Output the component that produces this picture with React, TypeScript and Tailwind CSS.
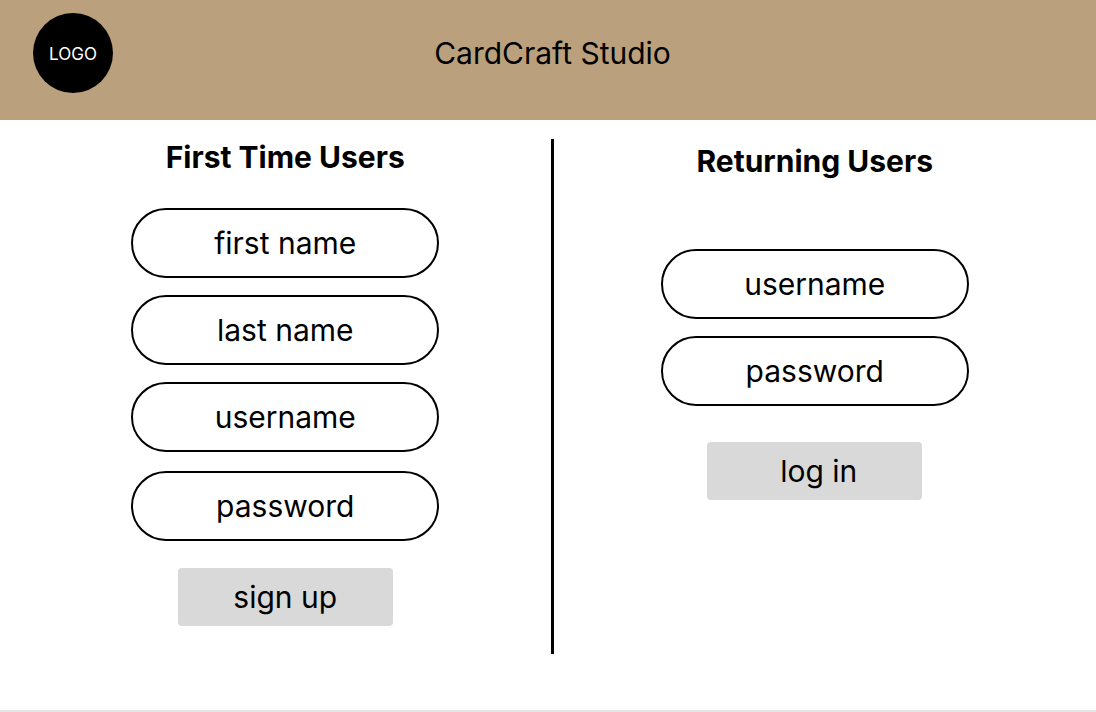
type FieldProps = {
  label: string;
  name: string;
  type?: string;
};

function Field({ label, name, type = "text" }: FieldProps) {
  return (
    <input
      type={type}
      name={name}
      aria-label={label}
      placeholder={label}
      className="h-[70px] w-full rounded-full border-2 border-black bg-white px-8 text-center text-[30px] text-black placeholder:text-black placeholder:opacity-100"
    />
  );
}

const buttonClass = "h-[58px] w-[215px] rounded bg-[#d9d9d9] text-[30px] text-black";

export default function App() {
  return (
    <div className="flex min-h-screen flex-col border-b-2 border-[#e6e6e6] bg-white font-['Inter',sans-serif] text-black">
      <header className="grid h-[120px] grid-cols-[80px_1fr_80px] items-start bg-[#baa07c] pt-[13px] pr-6 pl-[33px]">
        <div className="flex size-20 items-center justify-center rounded-full bg-black pt-1 text-[17px] text-white">
          LOGO
        </div>
        <h1 className="flex h-20 items-center justify-center text-[30px]">CardCraft Studio</h1>
      </header>

      <main className="flex items-stretch pt-[19px] pr-5 pl-6">
        <section className="flex flex-1 flex-col items-center">
          <h2 className="text-[30px] leading-9 font-bold">First Time Users</h2>
          <form className="mt-[33px] flex w-[308px] flex-col items-center" onSubmit={(e) => e.preventDefault()}>
            <div className="flex w-full flex-col gap-[17px]">
              <Field label="first name" name="firstName" />
              <Field label="last name" name="lastName" />
              <Field label="username" name="newUsername" />
            </div>
            <div className="mt-[19px] mb-[27px] w-full">
              <Field label="password" name="newPassword" type="password" />
            </div>
            <button type="submit" className={buttonClass}>
              sign up
            </button>
          </form>
        </section>

        <div className="ml-1 h-[515px] w-[3px] bg-black" />

        <section className="flex flex-1 flex-col items-center pt-1">
          <h2 className="text-[30px] leading-9 font-bold">Returning Users</h2>
          <form className="mt-[70px] flex w-[308px] flex-col items-center" onSubmit={(e) => e.preventDefault()}>
            <div className="mb-9 flex w-full flex-col gap-[17px]">
              <Field label="username" name="username" />
              <Field label="password" name="password" type="password" />
            </div>
            <button type="submit" className={`${buttonClass} pl-2`}>
              log in
            </button>
          </form>
        </section>
      </main>
    </div>
  );
}
